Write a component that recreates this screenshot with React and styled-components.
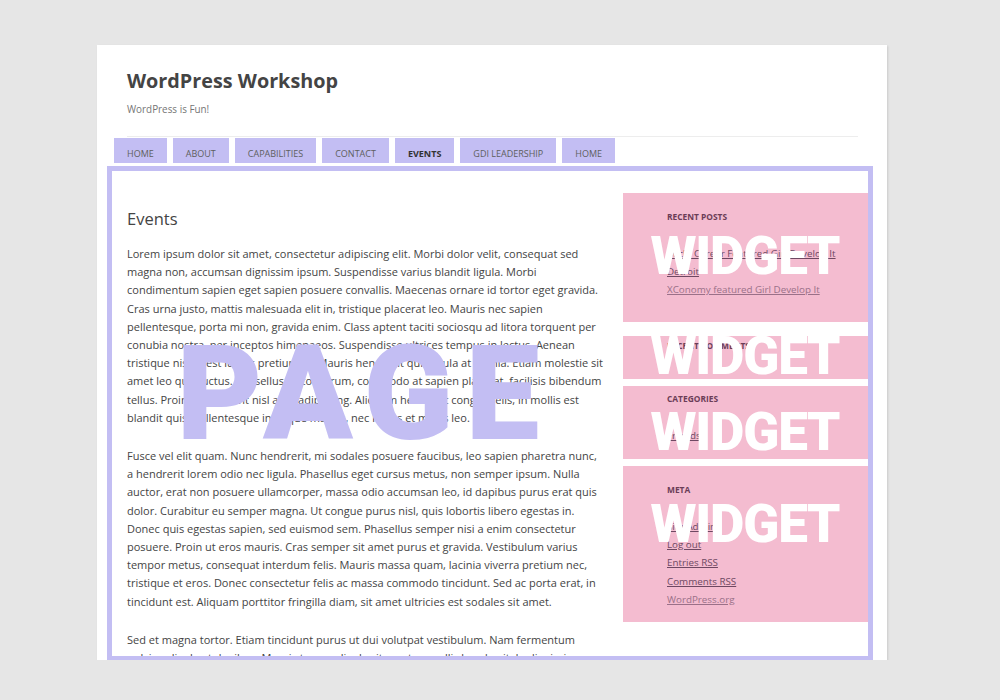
import React from "react"
import styled, { createGlobalStyle } from "styled-components"

const lavender = "#c3bef3"
const pink = "#f4bcd0"

const GlobalStyle = createGlobalStyle`
  body {
    margin: 0;
    background: #e6e6e6;
    font-family: "Open Sans", "Liberation Sans", sans-serif;
    color: #444;
  }
`

const Site = styled.div`
  width: 790px;
  height: 615px;
  margin: 45px 0 0 97px;
  background: #fff;
  box-shadow: 1px 1px 2px rgba(0, 0, 0, 0.12);
  overflow: hidden;
`

const Masthead = styled.header`
  padding: 22px 29px 0 30px;
`

const Hgroup = styled.div`
  padding-bottom: 19px;
  border-bottom: 1px solid #ededed;
`

const SiteTitle = styled.h1`
  margin: 0;
  font-size: 19.8px;
  line-height: 28px;
  font-weight: 700;
  color: #444;
`

const Tagline = styled.h2`
  margin: 6px 0 0;
  font-size: 9.9px;
  line-height: 16px;
  font-weight: 400;
  color: #757575;
`

const Nav = styled.nav`
  display: flex;
  gap: 6px;
  margin: 1px 0 0 17px;
`

const Tab = styled.a`
  display: block;
  height: 25px;
  box-sizing: border-box;
  padding: 8px 13px 0;
  background: ${lavender};
  font-size: 9px;
  line-height: 15px;
  text-transform: uppercase;
  text-decoration: none;
  color: ${p => (p.$current ? "#333" : "#5e5e5e")};
  font-weight: ${p => (p.$current ? 700 : 400)};
`

const PageBox = styled.div`
  position: relative;
  display: flex;
  width: 766px;
  height: 495px;
  box-sizing: border-box;
  margin: 3px 0 0 10px;
  border: 5px solid ${lavender};
  overflow: hidden;
`

const Main = styled.main`
  width: 473px;
  margin-left: 15px;
  padding-top: 36.5px;
  flex-shrink: 0;
`

const EntryTitle = styled.h1`
  margin: 0 0 16.5px;
  font-size: 16.5px;
  line-height: 21px;
  font-weight: 400;
  color: #444;
`

const Para = styled.p`
  margin: 0 0 20px;
  font-size: 11px;
  line-height: 18.2px;
  color: #444;
`

// lines kept as they break in the original column
const Line = styled.span`
  display: block;
  white-space: nowrap;
`

// big annotation labels laid over the page
const Stamp = styled.div`
  position: absolute;
  left: ${p => p.$left || 0}px;
  top: ${p => p.$top}px;
  width: ${p => p.$width}px;
  text-align: center;
  font-family: Roboto, "Open Sans", sans-serif;
  font-weight: 900;
  font-size: ${p => p.$size}px;
  letter-spacing: ${p => p.$spacing || 0}px;
  text-indent: ${p => p.$spacing || 0}px;
  line-height: 1;
  color: ${p => p.$color};
  pointer-events: none;
  white-space: nowrap;
`

const Sidebar = styled.aside`
  width: 245px;
  margin-left: 23px;
  padding-top: 22px;
  flex-shrink: 0;
`

const Widget = styled.section`
  position: relative;
  height: ${p => p.$h}px;
  box-sizing: border-box;
  margin-top: ${p => p.$mt}px;
  padding: ${p => p.$pt}px 16px 0 44px;
  background: ${pink};
`

const WidgetTitle = styled.h3`
  margin: 0 0 19px;
  font-size: 8.4px;
  line-height: 18px;
  font-weight: 700;
  text-transform: uppercase;
  color: #6b3d57;
`

const LinkList = styled.ul`
  margin: 0;
  padding: 0;
  list-style: none;
`

const LinkItem = styled.li`
  font-size: 9.8px;
  line-height: 18.2px;
  a {
    color: ${p => (p.$faded ? "#9a7088" : "#6e4862")};
    text-decoration: underline;
  }
`

const tabs = ["Home", "About", "Capabilities", "Contact", "Events", "GDI Leadership", "Home"]

const widgets = [
  {
    title: "Recent Posts",
    mt: 0, pt: 15, h: 129, stamp: 37,
    links: [
      { label: "Mich. Career Featured Girl Develop It Detroit" },
      { label: "XConomy featured Girl Develop It", faded: true },
    ],
  },
  { title: "Recent Comments", mt: 14, pt: 1, h: 43, stamp: -6, links: [] },
  { title: "Categories", mt: 7, pt: 4, h: 73, stamp: 20, links: [{ label: "Friends" }] },
  {
    title: "Meta",
    mt: 7, pt: 15, h: 156, stamp: 32,
    links: [
      { label: "Site Admin" },
      { label: "Log out" },
      { label: "Entries RSS" },
      { label: "Comments RSS" },
      { label: "WordPress.org", faded: true },
    ],
  },
]

const paragraphs = [
  [
    "Lorem ipsum dolor sit amet, consectetur adipiscing elit. Morbi dolor velit, consequat sed",
    "magna non, accumsan dignissim ipsum. Suspendisse varius blandit ligula. Morbi",
    "condimentum sapien eget sapien posuere convallis. Maecenas ornare id tortor eget gravida.",
    "Cras urna justo, mattis malesuada elit in, tristique placerat leo. Mauris nec sapien",
    "pellentesque, porta mi non, gravida enim. Class aptent taciti sociosqu ad litora torquent per",
    "conubia nostra, per inceptos himenaeos. Suspendisse ultrices tempus in lectus. Aenean",
    "tristique nisi et est luctus pretium et. Mauris hendrerit quis ligula at lacinia. Etiam molestie sit",
    "amet leo quis luctus. Phasellus justo rutrum, commodo at sapien placerat, facilisis bibendum",
    "tellus. Proin at tincidunt nisl ante adipiscing. Aliquam hendrerit congue felis, in mollis est",
    "blandit quis. Pellentesque in neque mauris, nec lectus et mollis leo.",
  ],
  [
    "Fusce vel elit quam. Nunc hendrerit, mi sodales posuere faucibus, leo sapien pharetra nunc,",
    "a hendrerit lorem odio nec ligula. Phasellus eget cursus metus, non semper ipsum. Nulla",
    "auctor, erat non posuere ullamcorper, massa odio accumsan leo, id dapibus purus erat quis",
    "dolor. Curabitur eu semper magna. Ut congue purus nisl, quis lobortis libero egestas in.",
    "Donec quis egestas sapien, sed euismod sem. Phasellus semper nisi a enim consectetur",
    "posuere. Proin ut eros mauris. Cras semper sit amet purus et gravida. Vestibulum varius",
    "tempor metus, consequat interdum felis. Mauris massa quam, lacinia viverra pretium nec,",
    "tristique et eros. Donec consectetur felis ac massa commodo tincidunt. Sed ac porta erat, in",
    "tincidunt est. Aliquam porttitor fringilla diam, sit amet ultricies est sodales sit amet.",
  ],
  [
    "Sed et magna tortor. Etiam tincidunt purus ut dui volutpat vestibulum. Nam fermentum",
    "pulvinar ligula et dapibus. Mauris tempor ligula sit amet convallis hendrerit. In dignissim",
    "rutrum mauris, at tincidunt nunc posuere vel. Nulla facilisi.",
  ],
]

export default function App() {
  return (
    <>
      <GlobalStyle />
      <Site>
        <Masthead>
          <Hgroup>
            <SiteTitle>WordPress Workshop</SiteTitle>
            <Tagline>WordPress is Fun!</Tagline>
          </Hgroup>
        </Masthead>
        <Nav>
          {tabs.map((t, i) => (
            <Tab key={i} href="#" $current={t === "Events"}>{t}</Tab>
          ))}
        </Nav>
        <PageBox>
          <Main>
            <EntryTitle>Events</EntryTitle>
            {paragraphs.map((lines, i) => (
              <Para key={i}>
                {lines.map((l, j) => (
                  <Line key={j}>{l}</Line>
                ))}
              </Para>
            ))}
          </Main>
          <Sidebar>
            {widgets.map((w, i) => (
              <Widget key={i} $mt={w.mt} $pt={w.pt} $h={w.h}>
                <WidgetTitle>{w.title}</WidgetTitle>
                <LinkList>
                  {w.links.map((l, j) => (
                    <LinkItem key={j} $faded={l.faded}>
                      <a href="#">{l.label}</a>
                    </LinkItem>
                  ))}
                </LinkList>
                <Stamp $top={w.stamp} $width={245} $size={53} $spacing={-1.2} $color="#fff">WIDGET</Stamp>
              </Widget>
            ))}
          </Sidebar>
          <Stamp $top={156.8} $left={-2} $width={496} $size={132} $spacing={12} $color={lavender}>PAGE</Stamp>
        </PageBox>
      </Site>
    </>
  )
}
